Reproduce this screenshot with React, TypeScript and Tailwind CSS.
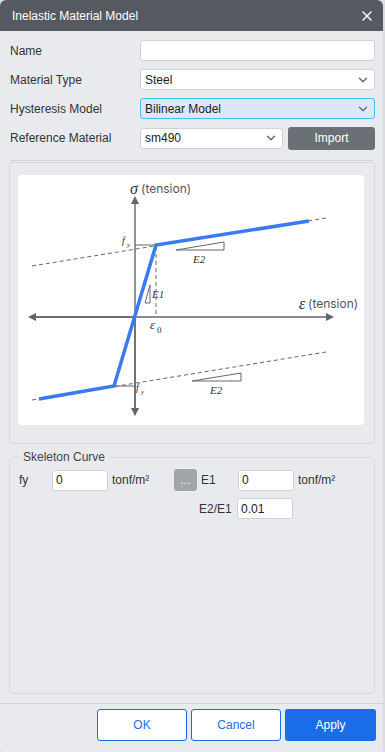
import { ChevronDown, X } from 'lucide-react';

const font = { fontFamily: '"Liberation Sans", Arial, sans-serif' };

function Select({ value, active }: { value: string; active?: boolean }) {
  return (
    <div
      className={`flex h-[21px] flex-1 items-center justify-between rounded-[3px] border px-[4px] ${
        active ? 'border-[#3cc3ee] bg-[#dce8fa]' : 'border-[#cfd2d6] bg-white'
      }`}
    >
      <span className="text-[12px] text-[#222]">{value}</span>
      <ChevronDown size={14} strokeWidth={2.5} className="text-[#6b7078]" />
    </div>
  );
}

function Row({ label, children }: { label: string; children: React.ReactNode }) {
  return (
    <div className="flex h-[21px] items-center">
      <span className="w-[130px] text-[12px] text-[#333]">{label}</span>
      <div className="flex flex-1 items-center gap-[5px]">{children}</div>
    </div>
  );
}

function Field({ value }: { value: string }) {
  return (
    <div className="flex h-[21px] w-[56px] items-center rounded-[3px] border border-[#cfd2d6] bg-white px-[3px] text-[12px] text-[#222]">
      {value}
    </div>
  );
}

function Chart() {
  const axis = '#62666c';
  const blue = '#3a7af4';
  return (
    <svg viewBox="18 173 346 250" className="h-full w-full">
      <defs>
        <marker id="ah" markerWidth="8" markerHeight="8" refX="6" refY="4" orient="auto" markerUnits="userSpaceOnUse">
          <path d="M0,0 L8,4 L0,8 z" fill={axis} />
        </marker>
      </defs>
      {/* axes */}
      <line x1="135" y1="413" x2="135" y2="196" stroke={axis} strokeWidth="1.4" markerEnd="url(#ah)" />
      <line x1="135" y1="315" x2="135" y2="412" stroke={axis} strokeWidth="1.4" markerEnd="url(#ah)" />
      <line x1="30" y1="315" x2="332" y2="315" stroke={axis} strokeWidth="1.4" markerEnd="url(#ah)" />
      <line x1="135" y1="315" x2="30" y2="315" stroke={axis} strokeWidth="1.4" markerEnd="url(#ah)" />
      {/* dashed envelope */}
      <line x1="32" y1="264" x2="326" y2="216" stroke={axis} strokeWidth="1" strokeDasharray="4 3" />
      <line x1="32" y1="398" x2="326" y2="350" stroke={axis} strokeWidth="1" strokeDasharray="4 3" />
      <line x1="156" y1="245" x2="156" y2="313" stroke={axis} strokeWidth="1" strokeDasharray="4 3" />
      {/* fy ticks */}
      <line x1="135" y1="243" x2="156" y2="243" stroke={axis} strokeWidth="1" />
      <line x1="114" y1="384" x2="135" y2="384" stroke={axis} strokeWidth="1" />
      {/* slope triangles */}
      <path d="M176,248 L224,248 L224,240 z" fill="none" stroke={axis} strokeWidth="1" />
      <path d="M192,379 L241,379 L241,371 z" fill="none" stroke={axis} strokeWidth="1" />
      <path d="M145,301 L150,301 L150,283 z" fill="none" stroke={axis} strokeWidth="1" />
      {/* curve */}
      <polyline
        points="39,397 114,384 156,243 309,219"
        fill="none"
        stroke={blue}
        strokeWidth="3.5"
        strokeLinejoin="miter"
      />
      {/* labels */}
      <text x="130" y="192" fontSize="16" fill="#333" fontFamily="Liberation Serif, serif" fontStyle="italic">σ</text>
      <text x="141" y="191" fontSize="12" fill="#555" fontFamily="Inter, sans-serif">(tension)</text>
      <text x="299" y="307" fontSize="16" fill="#333" fontFamily="Liberation Serif, serif" fontStyle="italic">ε</text>
      <text x="308" y="306" fontSize="12" fill="#555" fontFamily="Inter, sans-serif">(tension)</text>
      <g fontFamily="Liberation Serif, serif" fontStyle="italic" fill="#333">
        <text x="122" y="242" fontSize="10">f</text>
        <text x="127" y="245" fontSize="7">y</text>
        <text x="136" y="389" fontSize="10">f</text>
        <text x="141" y="392" fontSize="7">y</text>
        <text x="193" y="261" fontSize="11">E2</text>
        <text x="210" y="392" fontSize="11">E2</text>
        <text x="152" y="296" fontSize="11">E1</text>
        <text x="150" y="327" fontSize="13">ε</text>
        <text x="157" y="331" fontSize="9" fontStyle="normal">0</text>
      </g>
    </svg>
  );
}

export default function App() {
  return (
    <div className="flex h-[752px] w-[385px] bg-[#dcdde0]" style={font}>
      <div className="flex h-[752px] w-[383px] flex-col overflow-hidden rounded-t-[6px] rounded-b-[4px] bg-[#e9eaed]">
        <header className="flex h-[31px] shrink-0 items-center justify-between bg-[#555a61] pl-[12px] pr-[8px]">
          <span className="text-[12px] text-white">Inelastic Material Model</span>
          <X size={16} strokeWidth={2} className="text-white" />
        </header>

        <div className="flex flex-col gap-[8px] pl-[10px] pr-[8px] pt-[9px]">
          <Row label="Name">
            <div className="h-[21px] flex-1 rounded-[3px] border border-[#cfd2d6] bg-white" />
          </Row>
          <Row label="Material Type">
            <Select value="Steel" />
          </Row>
          <Row label="Hysteresis Model">
            <Select value="Bilinear Model" active />
          </Row>
          <div className="flex h-[22px] items-center">
            <span className="w-[130px] text-[12px] text-[#333]">Reference Material</span>
            <div className="flex flex-1 items-center gap-[5px]">
              <div className="flex w-[143px]">
                <Select value="sm490" />
              </div>
              <button className="h-[23px] flex-1 rounded-[3px] bg-[#6b7077] text-[12px] text-white">Import</button>
            </div>
          </div>
        </div>

        <div className="mx-[10px] mt-[11px] border-t border-[#cfd2d6]" />

        <div className="ml-[9px] mr-[8px] mt-[1px] h-[282px] rounded-[4px] border border-[#d6d8db] bg-[#e9eaed] p-[8px] pt-[12px]">
          <div className="h-[250px] w-[346px] overflow-hidden rounded-[4px] bg-white">
            <Chart />
          </div>
        </div>

        <fieldset className="ml-[9px] mr-[8px] mt-[4px] h-[246px] rounded-[4px] border border-[#d6d8db] px-[9px] pb-[6px]">
          <legend className="px-[4px] text-[12px] text-[#444]">Skeleton Curve</legend>
          <div className="mt-[3px] flex items-center">
            <span className="w-[33px] text-[12px] text-[#333]">fy</span>
            <Field value="0" />
            <span className="ml-[4px] w-[62px] text-[12px] text-[#333]">tonf/m²</span>
            <div className="flex h-[22px] w-[23px] items-center justify-center rounded-[3px] bg-[#a2a6ac] text-[11px] leading-none text-white">
              …
            </div>
            <span className="ml-[4px] w-[37px] text-[12px] text-[#333]">E1</span>
            <Field value="0" />
            <span className="ml-[4px] text-[12px] text-[#333]">tonf/m²</span>
          </div>
          <div className="mt-[7px] flex items-center">
            <span className="ml-[180px] w-[38px] text-[12px] text-[#333]">E2/E1</span>
            <Field value="0.01" />
          </div>
        </fieldset>

        <div className="mt-[9px] border-t border-[#cfd2d6]" />
        <div className="flex justify-end gap-[4px] pr-[7px] pt-[5px]">
          <button className="h-[32px] w-[90px] rounded-[3px] border border-[#1a6ce8] bg-white text-[12px] text-[#1a6ce8]">OK</button>
          <button className="h-[32px] w-[90px] rounded-[3px] border border-[#1a6ce8] bg-white text-[12px] text-[#1a6ce8]">Cancel</button>
          <button className="h-[32px] w-[91px] rounded-[3px] bg-[#1a6ce8] text-[12px] text-white">Apply</button>
        </div>
      </div>
    </div>
  );
}
